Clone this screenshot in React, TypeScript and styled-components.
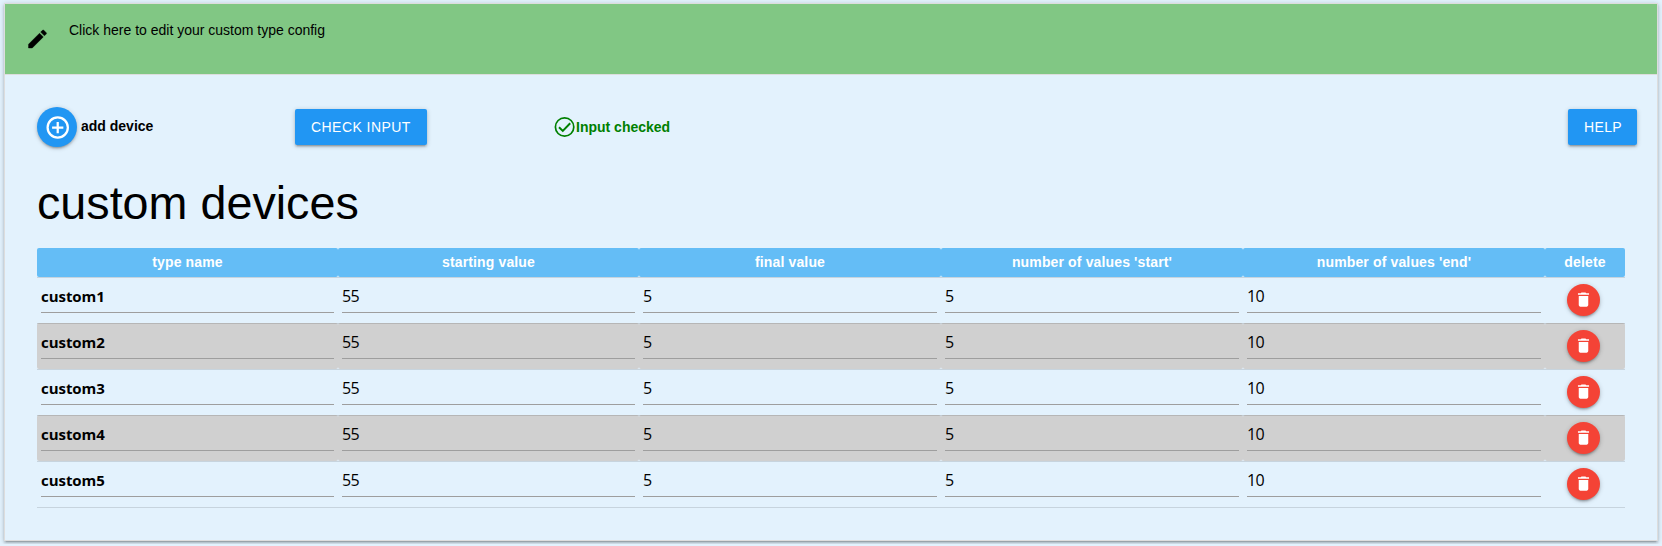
import React from 'react';
import styled, { createGlobalStyle, css } from 'styled-components';

const Global = createGlobalStyle`
  * { box-sizing: border-box; }
  html { height: 100%; overflow: hidden; background: #e3f2fd; }
  body { margin: 0; padding: 3px 4px; color: #000; font: 14px/20px "Liberation Sans", Arial, sans-serif; }
`;

const Panel = styled.main`
  height: 538px;
  border: 1px solid #ddd;
  background: #e3f2fd;
  box-shadow: 0 2px 2px 0 rgba(0,0,0,.14), 0 3px 1px -2px rgba(0,0,0,.12), 0 1px 5px 0 rgba(0,0,0,.2);
`;

const Banner = styled.header`
  display: flex;
  height: 71px;
  padding: 17px 0 0 20px;
  gap: 20px;
  background: #81c784;
  border-bottom: 1px solid #ddd;
  cursor: pointer;
`;

const BannerText = styled.span`
  line-height: 18px;
`;

const BannerIcon = styled.svg`
  width: 26px;
  height: 26px;
  margin-top: 5px;
  margin-right: -2px;
`;

const Toolbar = styled.div`
  display: grid;
  grid-template-columns: 258px 258px 1fr auto;
  align-items: center;
  height: 40px;
  margin: 32px 20px 0 32px;
`;

const AddDevice = styled.div`
  display: flex;
  align-items: center;
  gap: 4px;
  font-weight: bold;
`;

const raised = css`
  border: 0;
  color: #fff;
  box-shadow: 0 2px 2px 0 rgba(0,0,0,.14), 0 3px 1px -2px rgba(0,0,0,.12), 0 1px 5px 0 rgba(0,0,0,.2);
  cursor: pointer;
`;

const RoundButton = styled.button<{ $color: string; $width: number; $height: number }>`
  ${raised}
  display: inline-flex;
  align-items: center;
  justify-content: center;
  width: ${p => p.$width}px;
  height: ${p => p.$height}px;
  padding: 0;
  border-radius: 50%;
  background: ${p => p.$color};
`;

const AddLabel = styled.span`
  margin-top: -2px;
`;

const Button = styled.button<{ $width: number; $spacing: number }>`
  ${raised}
  justify-self: start;
  width: ${p => p.$width}px;
  height: 36px;
  padding: 0 0 0 16px;
  border-radius: 2px;
  background: #2196f3;
  font: 14px/36px "Liberation Sans", Arial, sans-serif;
  letter-spacing: ${p => p.$spacing}px;
  text-align: left;
  white-space: nowrap;
`;

const Status = styled.div`
  display: flex;
  align-items: center;
  color: green;
  font-weight: bold;
  > svg { margin-right: -1px; }
`;

const Title = styled.h1`
  margin: 30px 0 0 32px;
  font-size: 46.7px;
  line-height: 52px;
  font-weight: 400;
`;

const Table = styled.table`
  width: 1588px;
  margin: 19px 0 0 32px;
  table-layout: fixed;
  border-collapse: collapse;
`;

const HeadRow = styled.tr`
  height: 29px;
  border-bottom: 1px solid rgba(0,0,0,.12);
`;

const Head = styled.th`
  padding: 0;
  border-radius: 2px;
  background: #64bdf6;
  color: #fff;
  font-size: 14px;
  line-height: 20px;
  letter-spacing: .14px;
`;

const Row = styled.tr`
  height: 46px;
  border-bottom: 1px solid rgba(0,0,0,.12);
  > td {
    padding: 0 4px;
    border-radius: 2px;
    vertical-align: top;
  }
  &:nth-child(even) > td {
    background: #d0d0d0;
  }
`;

const Field = styled.input<{ $bold: boolean }>`
  display: block;
  width: 100%;
  height: 35px;
  padding: 2px 0 0;
  border: 0;
  border-bottom: 1px solid #9e9e9e;
  background: transparent;
  color: #000;
  outline: 0;
  font: ${p => (p.$bold ? '700 15px' : '400 16px')} "Open Sans", sans-serif;
  letter-spacing: ${p => (p.$bold ? '-.05px' : '-.6px')};
`;

const DeleteSlot = styled.div`
  display: flex;
  justify-content: center;
  padding: 6px 3px 0 0;
`;

const columns = [
  { label: 'type name', width: 301 },
  { label: 'starting value', width: 301 },
  { label: 'final value', width: 302 },
  { label: "number of values 'start'", width: 302 },
  { label: "number of values 'end'", width: 302 },
  { label: 'delete', width: 80 },
];

const devices = ['custom1', 'custom2', 'custom3', 'custom4', 'custom5'].map(name => [name, '55', '5', '5', '10']);

export default function App() {
  return (
    <>
      <Global />
      <Panel>
        <Banner>
          <BannerIcon viewBox="0 0 26 26">
            <path transform="translate(.5 1)" d="M3 17.25V21h3.75L17.81 9.94l-3.75-3.75L3 17.25zM20.71 7.04a1 1 0 0 0 0-1.41l-2.34-2.34a1 1 0 0 0-1.41 0l-1.83 1.83 3.75 3.75 1.83-1.83z" stroke="#000" strokeWidth=".4" />
          </BannerIcon>
          <BannerText>Click here to edit your custom type config</BannerText>
        </Banner>
        <Toolbar>
          <AddDevice>
            <RoundButton $color="#2196f3" $width={40} $height={40} aria-label="add device">
              <svg width="27" height="27" viewBox="0 0 24 24" fill="none" stroke="currentColor" strokeWidth="2">
                <circle cx="12.2" cy="12" r="9" />
                <path d="M12.2 7v10M7.2 12h10" />
              </svg>
            </RoundButton>
            <AddLabel>add device</AddLabel>
          </AddDevice>
          <Button $width={132} $spacing={0.45}>CHECK INPUT</Button>
          <Status>
            <svg width="24" height="24" viewBox="0 0 24 24" fill="none" stroke="currentColor">
              <circle cx="11.6" cy="12" r="9.2" strokeWidth="1.7" />
              <path d="M6 12.2l3.8 3.7 7.4-7.7" strokeWidth="2" />
            </svg>
            Input checked
          </Status>
          <Button $width={69} $spacing={0.35}>HELP</Button>
        </Toolbar>
        <Title>custom devices</Title>
        <Table>
          <colgroup>
            {columns.map(c => <col key={c.label} width={c.width} />)}
          </colgroup>
          <thead>
            <HeadRow>{columns.map(c => <Head key={c.label}>{c.label}</Head>)}</HeadRow>
          </thead>
          <tbody>
            {devices.map((cells, i) => (
              <Row key={i}>
                {cells.map((v, j) => (
                  <td key={j}><Field $bold={j === 0} defaultValue={v} /></td>
                ))}
                <td>
                  <DeleteSlot>
                    <RoundButton $color="#f44336" $width={33} $height={32} aria-label="delete">
                      <svg width="19" height="19" viewBox="0 0 24 24" fill="currentColor">
                        <path d="M6 19c0 1.1.9 2 2 2h8c1.1 0 2-.9 2-2V7.5H6V19zM19 4h-3.5l-1-1h-5l-1 1H5v2h14V4z" />
                      </svg>
                    </RoundButton>
                  </DeleteSlot>
                </td>
              </Row>
            ))}
          </tbody>
        </Table>
      </Panel>
    </>
  );
}
